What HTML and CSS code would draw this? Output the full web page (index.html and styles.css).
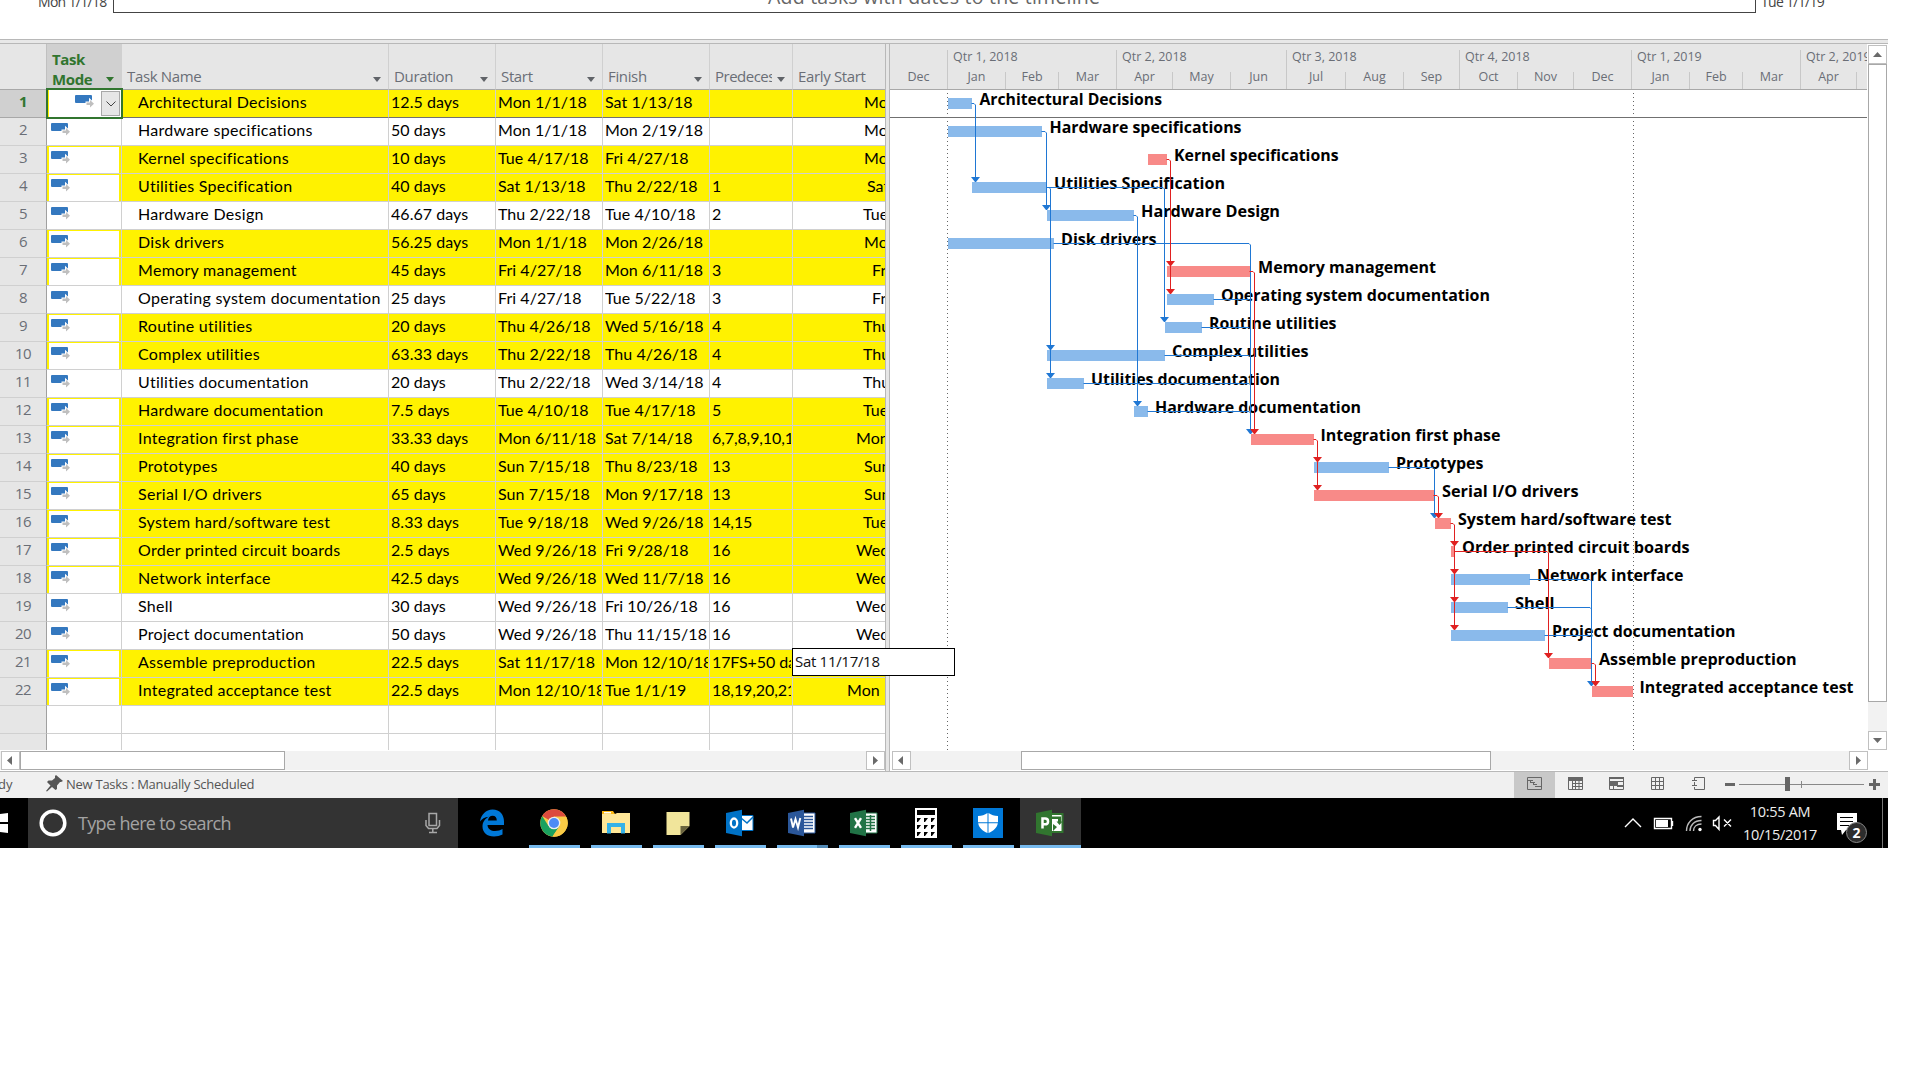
FILE: index.html
```html
<!DOCTYPE html>
<html lang="en">
<head>
<meta charset="utf-8">
<title>Project schedule</title>
<link rel="stylesheet" href="styles.css">
</head>
<body>
<svg class="defs" width="0" height="0">
  <symbol id="mode" viewBox="0 0 19 14">
    <rect width="17" height="8" rx="1" fill="#3478bf"/>
    <path fill="#bfbfbf" stroke="#fff" stroke-width="2" paint-order="stroke" d="M11.500 7.500H15V5l4 3.800-4 3.700V10h-3.500z"/>
  </symbol>
</svg>
<div class="app">
  <section class="timeline">
    <span class="tl-start">Mon 1/1/18</span>
    <div class="tl-box"><span>Add tasks with dates to the timeline</span></div>
    <span class="tl-end">Tue 1/1/19</span>
  </section>
  <div class="hsplit"></div>

  <main class="panes">
    <section class="sheet">
      <header class="row head">
        <div></div>
        <div class="on">Task<br>Mode<i class="tri"></i></div>
        <div>Task Name<i class="tri"></i></div>
        <div>Duration<i class="tri"></i></div>
        <div>Start<i class="tri"></i></div>
        <div>Finish<i class="tri"></i></div>
        <div><span class="cut">Predecessors</span><i class="tri"></i></div>
        <div>Early Start</div>
      </header>
      <div class="rows" id="rows"></div>
      <div class="hscroll">
        <span class="sbtn"><svg width="19" height="19"><path d="M11 5v9L6 9.500z"/></svg></span>
        <span class="thumb sheet-thumb"></span>
        <span class="grow"></span>
        <span class="sbtn"><svg width="19" height="19"><path d="M7 5v9l5-4.500z"/></svg></span>
      </div>
      <div class="tip">Sat 11/17/18</div>
    </section>
    <div class="vsplit"></div>
    <section class="chart">
      <header class="scale" id="scale"></header>
      <svg class="gantt" id="gantt" viewBox="890 90 977 660" width="977" height="660"></svg>
      <div class="hscroll">
        <span class="sbtn"><svg width="19" height="19"><path d="M11 5v9L6 9.500z"/></svg></span>
        <span class="gap-left"></span>
        <span class="thumb chart-thumb"></span>
        <span class="grow"></span>
        <span class="sbtn"><svg width="19" height="19"><path d="M7 5v9l5-4.500z"/></svg></span>
      </div>
    </section>
    <aside class="vscroll">
      <span class="sbtn"><svg width="19" height="19"><path d="M5 12h9L9.500 7z"/></svg></span>
      <span class="vthumb"></span>
      <span class="grow"></span>
      <span class="sbtn"><svg width="19" height="19"><path d="M5 7h9l-4.500 5z"/></svg></span>
    </aside>
  </main>

  <footer class="status">
    <span class="ready">dy</span>
    <svg class="pin" width="17" height="17" viewBox="0 0 17 17"><path fill="#555" d="M10 0l7 6-2 1-1 0-3 3.500 0 3.500-1.500 1L6 12 1 16.500 0 16l4.500-5.500L1 7l1.500-1.500H6L9 3V1z"/></svg>
    <span class="newtasks">New Tasks : Manually Scheduled</span>
    <div class="views">
      <span class="view sel"><svg width="15" height="13"><path d="M.5.5h14v12H.5zM1 3.500h5M3 5.500h5M6 7.500h4M8 9.500h6M3.500 3v2M6.500 5v2"/></svg></span>
      <span class="view"><svg width="15" height="13"><path d="M.5.5h14v12H.5zM4.500 3v10M7.500 3v10M11 3v10M4 6.500h11M4 9.500h11"/><path class="f" d="M0 0h15v4H0z"/></svg></span>
      <span class="view"><svg width="15" height="13"><path d="M.5.5h14v12H.5zM0 8.500h15M8 4.500h7M4.500 8v5"/><path class="f" d="M0 0h15v2H0zM0 4h9v5H0zM8 8h7v2H8z"/></svg></span>
      <span class="view"><svg width="13" height="13"><path d="M.5.5h12v12H.5zM4.500 0v13M8.500 0v13M0 4.500h13M0 8.500h13"/></svg></span>
      <span class="view"><svg width="13" height="13"><path d="M2.500 3V.5h10v12h-10V10M2.500 5v3M0 3.500h5M0 8.500h5"/></svg></span>
    </div>
    <svg class="zoom" width="158" height="20" viewBox="0 0 158 20"><path stroke="#888" d="M16 10.500h125M78.500 7v7"/><path class="f" d="M2 9h10v3H2zM62 3h5v14h-5zM146 9h11v3h-11zM150 5h3v11h-3z"/></svg>
  </footer>

  <nav class="taskbar">
    <svg class="win" width="28" height="50"><path fill="#fff" d="M0 16l8-1v9H0zM0 26h8v9l-8-1z"/></svg>
    <div class="search">
      <svg width="28" height="28"><circle cx="14" cy="14" r="11.800" fill="none" stroke="#fff" stroke-width="3.500"/></svg>
      <span>Type here to search</span>
      <svg class="mic" width="16" height="22" viewBox="0 0 16 22" fill="none" stroke="#a8a8a8" stroke-width="1.500"><path d="M4 1.500h7.500v12H4zM1 8v5.500l2.500 3H12l2.500-3V8M7.800 17v3.500M4 20.500h8"/></svg>
    </div>
    <div class="apps">
      <span class="slot"><svg width="28" height="28" viewBox="0 0 28 28"><path fill="#0078d7" d="M2 12.500C3 5.500 8 .5 14.500.5 22 .5 26 6 26 12.500V16H9.500c.3 4 3.500 6 7.500 6 3 0 5.500-.8 7.500-2v5.500c-2.500 1.300-5.300 2-8.500 2C9 27.500 4.500 23.500 4.500 17.500c0-4.500 2.500-8 6.300-9.800C6.500 8 4 10 2 12.500zM10 11.500h8.800c0-3-1.500-4.800-4.200-4.800-2.600 0-4.200 1.800-4.600 4.800z"/></svg></span>
      <span class="slot run"><svg width="28" height="28" viewBox="0 0 28 28"><circle cx="14" cy="14" r="13.700" fill="#f9cb45"/><path fill="#dc4b3e" d="M14 14L2.200 7A13.700 13.700 0 0 1 26 7.500H14z"/><path fill="#1aa15f" d="M2.200 7A13.700 13.700 0 0 0 12.500 27.600L19.500 17 8.500 17z"/><path fill="#f9cb45" d="M12.500 27.600L19.800 17 19 8h7.300a13.700 13.700 0 0 1-13.800 19.600z"/><circle cx="14" cy="14" r="6.300" fill="#eee"/><circle cx="14" cy="14" r="5" fill="#4c8bf5"/></svg></span>
      <span class="slot run"><svg width="28" height="28" viewBox="0 0 28 28"><path fill="#fdb913" d="M0 2h11l2 3v4H0z"/><path fill="#ffe797" d="M0 5h13l2-1h13v20H0z"/><path fill="#fff" d="M2 3h7v1.500H2z"/><path fill="#35b2e8" d="M5 24.500V14h18v10.500h-4V18H9v6.500z"/></svg></span>
      <span class="slot run"><svg width="28" height="28" viewBox="0 0 28 28"><path fill="#f1e59b" d="M2.500 3h23v14l-9 9h-14z"/><path fill="#6a643f" d="M16.500 17h9l-9 9z"/></svg></span>
      <span class="slot run"><svg width="28" height="28" viewBox="0 0 28 28"><path fill="#fff" stroke="#0072c6" stroke-width="1" d="M14 6.500h13v15H14z"/><path fill="none" stroke="#0072c6" stroke-width="1.500" d="M15 9l6 5 6-6"/><path fill="#0072c6" d="M0 4L16 .8v26.500L0 24z"/><ellipse cx="8" cy="14" rx="3.200" ry="4.500" fill="none" stroke="#fff" stroke-width="2.300"/></svg></span>
      <span class="slot run multi"><svg width="28" height="28" viewBox="0 0 28 28"><path fill="#fff" stroke="#2b579a" d="M15 4h12v20H15z"/><path stroke="#2b579a" stroke-width="1.500" d="M16 7.500h9M16 10.500h9M16 13.500h9M16 16.500h9M16 19.500h9"/><path fill="#2b579a" d="M0 4L16 .8v26.500L0 24z"/><path fill="none" stroke="#fff" stroke-width="1.900" d="M3 9.500l2 9 2.500-8.500 2.500 8.500 2.300-9.500"/></svg></span>
      <span class="slot run"><svg width="28" height="28" viewBox="0 0 28 28"><path fill="#fff" stroke="#217346" d="M15 4h12v20H15z"/><path stroke="#217346" stroke-width="1.500" d="M16 7.500h9M16 10.500h9M16 13.500h9M16 16.500h9M16 19.500h9M20.500 6v16"/><path fill="#217346" d="M0 4L16 .8v26.500L0 24z"/><path fill="none" stroke="#fff" stroke-width="2.400" d="M5 9.200l6 9.600M11 9.200l-6 9.600"/></svg></span>
      <span class="slot run"><svg width="22" height="30" viewBox="0 0 22 30"><path fill="#fff" d="M0 0h22v30H0z"/><path fill="#000" d="M2 2h18v5H2zM2 10h4l-3 4H2zM9 10h4l-3 4H9zM16 10h4l-3 4h-1zM2 17h4l-3 4H2zM9 17h4l-3 4H9zM16 17h4l-3 4h-1zM2 24h4l-3 4H2zM9 24h4l-3 4H9zM16 24h4l-3 4h-1z"/></svg></span>
      <span class="slot run"><svg width="30" height="30" viewBox="0 0 30 30"><path fill="#0078d7" d="M0 0h30v30H0z"/><path fill="#fff" d="M14.500 5v9.300H5V8c4 0 6.500-1 9.500-3zM15.500 5v9.300H25V8c-4 0-6.500-1-9.500-3zM5.200 15.300h9.300v9.700c-5-2-8.500-5.200-9.300-9.700zM24.800 15.300h-9.300v9.700c5-2 8.500-5.200 9.300-9.700z"/></svg></span>
      <span class="slot run active"><svg width="28" height="28" viewBox="0 0 28 28"><path fill="#fff" stroke="#31752f" stroke-width="2" d="M14 5h12.500v18H14z"/><path fill="#31752f" d="M16 7.500h9v5h1.500L23.500 16 20.500 12.500H22V10h-6zM17 15l4 3-4 4z"/><path fill="#31752f" d="M0 4L16 .8v26.500L0 24z"/><path fill="none" stroke="#fff" stroke-width="2.500" d="M6.500 19.500V9.500h2.700c3.800 0 3.800 5.800 0 5.800H6.500"/></svg></span>
    </div>
    <div class="tray">
      <svg width="120" height="50" viewBox="1620 798 120 50" fill="none" stroke="#fff" stroke-width="1.400">
        <path d="M1625 827l8-8 8 8"/>
        <path d="M1654.500 818.500h17v10h-17zM1672.500 821v5"/><path fill="#fff" stroke="none" d="M1656 820h12v7h-12z"/>
        <path stroke="#bbb" d="M1686.500 831c0-8 6-14.500 15-14.500M1690 831c0-6 4.500-10.500 11.500-10.500M1693.500 831c0-4 3-7 8-7"/><circle cx="1700" cy="829.500" r="1.700" fill="#fff" stroke="none"/>
        <path d="M1713.500 820.500v5h2l3.500 4v-12.500l-3.500 3.500zM1724 819.500l7 7M1731 819.500l-7 7"/>
      </svg>
      <div class="clock"><span>10:55 AM</span><span>10/15/2017</span></div>
      <svg width="40" height="50" viewBox="1832 798 40 50"><path fill="#fff" d="M1837 813h20v17h-11l-4 5-1-5h-4z"/><path stroke="#000" stroke-width="1.200" d="M1840 817.500h13M1840 821.500h13M1840 825.500h9"/><circle cx="1856.500" cy="832.500" r="10" fill="#2d2d2d" stroke="#888"/><text class="badge" x="1856.500" y="838" text-anchor="middle">2</text></svg>
    </div>
  </nav>
</div>
<script src="script.js"></script>
</body>
</html>
```
FILE: styles.css
```css
* { box-sizing: border-box; }
body { margin: 0; background: #fff; font-family: "Open Sans", "Noto Sans", sans-serif; color: #000; overflow: hidden; }
.defs { position: absolute; }
.app { width: 1888px; display: flex; flex-direction: column; }

/* timeline strip */
.timeline { display: flex; height: 39px; overflow: hidden; color: #444; font-size: 14px; line-height: 20px; }
.timeline > span { height: 20px; margin-top: -8px; letter-spacing: -0.7px; white-space: nowrap; }
.tl-start { width: 113px; padding-left: 38px; }
.tl-box { width: 1643px; height: 13px; border: solid #444; border-width: 0 1px 1px; }
.tl-box span { display: block; margin: -16px 0 0 654px; font-size: 19.500px; line-height: 26px; color: #666; white-space: nowrap; letter-spacing: 0.22px; }
.tl-end { padding-left: 5px; }
.hsplit { height: 5px; background: #e8e8e8; border: solid #b8b8b8; border-width: 1px 0; }

/* panes */
.panes { display: flex; height: 727px; }
.sheet { position: relative; width: 885px; display: flex; flex-direction: column; }
.row { display: grid; grid-template-columns: 47px 75px 267px 107px 107px 107px 83px 92px; height: 28px; }
.row > div { border-right: 1px solid #d0d0d0; border-bottom: 1px solid #d0d0d0; overflow: hidden; white-space: nowrap; }
.row > div:last-child { border-right: 0; }
.head { height: 46px; background: #e6e6e6; color: #6a6e76; font-size: 15px; line-height: 20px; }
.head > div { display: flex; align-items: flex-end; justify-content: space-between; padding: 0 7px 3px 5px; border-bottom-color: #a8a8a8; letter-spacing: -0.35px; }
.head > div:first-child { border-right-color: #c0c0c0; }
.head .on { background: #d0d0d0; color: #31752f; font-weight: 700; padding-bottom: 0; letter-spacing: -0.4px; padding-right: 7px; }
.head .cut { width: 57px; overflow: hidden; letter-spacing: -0.5px; }
.tri { flex: none; border: solid transparent; border-width: 5px 4px 0; border-top-color: #606368; margin-bottom: 4px; }
.on .tri { border-top-color: #31752f; margin-bottom: 7px; }
.rows .row:last-child { height: 16px; }
.rows .row > div { font: 16px/23px "Lato", "Open Sans", sans-serif; padding-left: 2px; letter-spacing: 0.05px; }
.rows .row > .num { font: 15px/23px "Open Sans", sans-serif; background: #e6e6e6; color: #6a6e76; border-right-color: #a0a0a0; text-align: center; padding: 0; letter-spacing: -0.500px; }
.rows .row > .name { padding-left: 16px; letter-spacing: 0.29px; }
.rows .row:last-child > div { border-bottom: 0; }
.cell { display: block; overflow: hidden; margin-right: 1px; height: 26px; }
.cell.pred { letter-spacing: -0.1px; }
.hl > div { background: #fff200; }
.rows .row > .mode { background: #fff; padding: 0; }
.mode > svg { display: block; margin: 5px 0 0 4px; }
.rows .hl > .mode { box-shadow: inset 2px 1px #fff200, inset -2px 0 #fff200; }
.rows .picked > div { border-bottom-color: #707070; }
.rows .picked > .num { background: #d0d0d0; color: #31752f; font-weight: 700; border-bottom-color: #a8a8a8; }
.rows .picked > .mode { position: relative; overflow: visible; box-shadow: inset 2px 0 #fff200; }
.picked .mode > svg { margin-left: 28px; }
.picker { position: absolute; left: -1px; top: -2px; width: 77px; height: 31px; border: 2px solid #31752f; display: flex; justify-content: flex-end; padding: 1px; }
.picker span { width: 19px; height: 25px; background: #e6e6e6; border: 1px solid #a8a8a8; }
.picker svg { display: block; margin: 8px 0 0 4px; }

.tip { position: absolute; left: 792px; top: 604px; width: 163px; height: 28px; z-index: 2; background: #fff; border: 1px solid #000; padding-left: 2px; font-size: 15px; line-height: 25px; color: #111; letter-spacing: -0.3px; }
.vsplit { width: 5px; background: #e6e6e6; border: solid #b8b8b8; border-width: 0 1px; }

/* gantt */
.chart { width: 977px; display: flex; flex-direction: column; }
.scale { display: flex; height: 46px; background: #e6e6e6; border-bottom: 1px solid #a8a8a8; color: #6a6e76; font-size: 12.500px; overflow: hidden; }
.qtr { flex: none; padding-top: 6px; display: flex; flex-direction: column; }
.qtr .title { height: 22px; line-height: 14px; border-left: 1px solid #c8c8c8; padding-left: 5px; white-space: nowrap; }
.qtr:first-child .title { border: 0; }
.months { display: flex; }
.months span { flex: none; height: 17px; line-height: 10px; text-align: center; border-left: 1px solid #c8c8c8; }
.qtr:first-child .months span { border: 0; }
.gantt { display: block; }
.gantt text { font: 700 16px "Open Sans", sans-serif; }
.link { fill: none; stroke-width: 1; }

/* scroll bars */
.hscroll { display: flex; height: 19px; margin-top: 1px; background: #f2f2f2; }
.sheet .hscroll { padding-left: 1px; }
.chart .hscroll { margin-left: 2px; margin-right: -1px; }
.sbtn { flex: none; width: 19px; height: 19px; background: #fff; box-shadow: inset 0 0 0 1px #c0c0c0; }
.sbtn svg { display: block; fill: #6a6a6a; }
.thumb { background: #fff; border: 1px solid #a8a8a8; }
.sheet-thumb { width: 265px; }
.chart-thumb { width: 470px; }
.gap-left { width: 110px; }
.grow { flex: 1; }
.vscroll { width: 19px; margin-left: 1px; height: 705px; margin-top: 1px; display: flex; flex-direction: column; background: #f2f2f2; }
.vthumb { height: 638px; background: #fff; border: 1px solid #a8a8a8; }

/* status bar */
.status { height: 27px; background: #f0f0f0; border-top: 1px solid #b8b8b8; display: flex; align-items: center; font-size: 13px; color: #555; white-space: nowrap; }
.ready { width: 47px; margin-left: -2px; padding-bottom: 2px; }
.pin { margin: -3px 3px 0 1px; }
.newtasks { letter-spacing: -0.26px; padding-bottom: 2px; }
.views { display: flex; margin-left: auto; align-self: stretch; }
.view { width: 41px; display: flex; align-items: center; justify-content: center; padding-bottom: 3px; }
.view svg { fill: none; stroke: #666; }
.view .f, .zoom .f { fill: #666; stroke: none; }
.sel { background: #c8c8c8; }
.zoom { margin: -2px 7px 0 4px; }

/* taskbar */
.taskbar { display: flex; height: 50px; background: #000; color: #fff; }
.search { width: 430px; background: #333; display: flex; align-items: center; padding: 0 17px 0 11px; font-size: 18px; color: #a3a3a3; }
.search span { margin: 0 0 0 11px; letter-spacing: -0.67px; }
.mic { margin-left: auto; }
.apps { display: flex; margin-left: 3px; }
.slot { width: 62px; display: flex; align-items: center; justify-content: center; }
.slot.run { background: linear-gradient(#76b9ed, #76b9ed) 6px 47px / 51px 3px no-repeat; }
.slot.multi { background: linear-gradient(90deg, #76b9ed 40px, #5289b5 40px) 6px 47px / 51px 3px no-repeat; }
.slot.active { width: 61px; background: linear-gradient(#333 47px, #76b9ed 47px); margin-left: 1px; }
.slot.active svg { margin-right: 2px; }
.tray { display: flex; margin-left: auto; width: 268px; border-right: 5px solid #000; box-shadow: inset -1px 0 #777; }
.clock { width: 80px; margin: 0 12px 0 0; font-size: 14.500px; line-height: 23px; text-align: center; letter-spacing: -0.3px; display: flex; flex-direction: column; padding-top: 2px; color: #eee; }
.tray svg { flex: none; }
.badge { font-size: 14px; font-weight: 700; fill: #fff; }
```
FILE: script.js
```js
// name, duration, start, finish, predecessors, early start, early-start inset, highlighted,
// bar start, bar end, critical, label start, label end
const tasks = [
  ["Architectural Decisions", "12.5 days", "Mon 1/1/18", "Sat 1/13/18", "", "Mon", 71, 1, 948, 972, 0, 979.5, 1162],
  ["Hardware specifications", "50 days", "Mon 1/1/18", "Mon 2/19/18", "", "Mon", 71, 0, 948, 1042, 0, 1049.5, 1241.5],
  ["Kernel specifications", "10 days", "Tue 4/17/18", "Fri 4/27/18", "", "Mon", 71, 1, 1148, 1167, 1, 1174, 1338.5],
  ["Utilities Specification", "40 days", "Sat 1/13/18", "Thu 2/22/18", "1", "Sat", 74, 1, 972, 1047, 0, 1054, 1225],
  ["Hardware Design", "46.67 days", "Thu 2/22/18", "Tue 4/10/18", "2", "Tue", 70, 0, 1047, 1134, 0, 1141, 1280],
  ["Disk drivers", "56.25 days", "Mon 1/1/18", "Mon 2/26/18", "", "Mon", 71, 1, 948, 1054, 0, 1061, 1156.5],
  ["Memory management", "45 days", "Fri 4/27/18", "Mon 6/11/18", "3", "Fri", 79, 1, 1167, 1250, 1, 1258, 1436],
  ["Operating system documentation", "25 days", "Fri 4/27/18", "Tue 5/22/18", "3", "Fri", 79, 0, 1167, 1214, 0, 1221, 1490],
  ["Routine utilities", "20 days", "Thu 4/26/18", "Wed 5/16/18", "4", "Thu", 70, 1, 1165, 1202, 0, 1209, 1336.5],
  ["Complex utilities", "63.33 days", "Thu 2/22/18", "Thu 4/26/18", "4", "Thu", 70, 1, 1047, 1165, 0, 1172, 1308.5],
  ["Utilities documentation", "20 days", "Thu 2/22/18", "Wed 3/14/18", "4", "Thu", 70, 0, 1047, 1084, 0, 1091, 1280],
  ["Hardware documentation", "7.5 days", "Tue 4/10/18", "Tue 4/17/18", "5", "Tue", 70, 1, 1134, 1148, 0, 1155, 1361],
  ["Integration first phase", "33.33 days", "Mon 6/11/18", "Sat 7/14/18", "6,7,8,9,10,11,12", "Mon", 63, 1, 1251, 1314, 1, 1320.5, 1500.5],
  ["Prototypes", "40 days", "Sun 7/15/18", "Thu 8/23/18", "13", "Sun", 71, 1, 1314, 1389, 0, 1396, 1483.5],
  ["Serial I/O drivers", "65 days", "Sun 7/15/18", "Mon 9/17/18", "13", "Sun", 71, 1, 1314, 1434, 1, 1442, 1578.5],
  ["System hard/software test", "8.33 days", "Tue 9/18/18", "Wed 9/26/18", "14,15", "Tue", 70, 1, 1435, 1451, 1, 1458, 1671.5],
  ["Order printed circuit boards", "2.5 days", "Wed 9/26/18", "Fri 9/28/18", "16", "Wed", 63, 1, 1451, 1455, 1, 1462, 1689.5],
  ["Network interface", "42.5 days", "Wed 9/26/18", "Wed 11/7/18", "16", "Wed", 63, 1, 1451, 1530, 0, 1537, 1683.5],
  ["Shell", "30 days", "Wed 9/26/18", "Fri 10/26/18", "16", "Wed", 63, 0, 1451, 1508, 0, 1515, 1554.5],
  ["Project documentation", "50 days", "Wed 9/26/18", "Thu 11/15/18", "16", "Wed", 63, 0, 1451, 1545, 0, 1552, 1735.5],
  ["Assemble preproduction", "22.5 days", "Sat 11/17/18", "Mon 12/10/18", "17FS+50 days", "", 63, 1, 1549, 1592, 1, 1599, 1796.5],
  ["Integrated acceptance test", "22.5 days", "Mon 12/10/18", "Tue 1/1/19", "18,19,20,21", "Mon", 54, 1, 1592, 1633, 1, 1639.5, 1853.5],
];

const picker = '<div class="picker"><span><svg width="10" height="8" fill="none" stroke="#444"><path d="M.5 1.5L5 6 9.500 1.500"/></svg></span></div>';
const modeIcon = '<svg width="19" height="14"><use href="#mode"/></svg>';
let html = "";
tasks.forEach((t, i) => {
  const cls = "row" + (t[7] ? " hl" : "") + (i === 0 ? " picked" : "");
  html += `<div class="${cls}"><div class="num">${i + 1}</div><div class="mode">${modeIcon}${i === 0 ? picker : ""}</div><div class="name">${t[0]}</div>`
    + [1, 2, 3, 4].map(k => `<div><span class="cell${k === 4 ? " pred" : ""}">${t[k]}</span></div>`).join("")
    + `<div class="early" style="padding-left:${t[6]}px">${t[5]}</div></div>`;
});
for (let i = 0; i < 2; i++) html += '<div class="row"><div class="num"></div><div class="mode"></div>' + "<div></div>".repeat(6) + "</div>";
document.getElementById("rows").innerHTML = html;

// Time scale: quarter title and [month, width] pairs
const scale = [
  ["", [["Dec", 57]]],
  ["Qtr 1, 2018", [["Jan", 58], ["Feb", 53], ["Mar", 58]]],
  ["Qtr 2, 2018", [["Apr", 56], ["May", 58], ["Jun", 56]]],
  ["Qtr 3, 2018", [["Jul", 59], ["Aug", 58], ["Sep", 56]]],
  ["Qtr 4, 2018", [["Oct", 58], ["Nov", 56], ["Dec", 58]]],
  ["Qtr 1, 2019", [["Jan", 58], ["Feb", 53], ["Mar", 58]]],
  ["Qtr 2, 2019", [["Apr", 56], ["", 58]]],
];
document.getElementById("scale").innerHTML = scale.map(([q, ms]) =>
  `<div class="qtr"><div class="title">${q}</div><div class="months">${ms.map(([m, w]) => `<span style="width:${w}px">${m}</span>`).join("")}</div></div>`).join("");

const BLUE = "#1f77d4", RED = "#e02020";
const mid = n => 103.5 + 28 * (n - 1);
const barTop = n => 98 + 28 * (n - 1);
let g = '<path stroke="#666" stroke-dasharray="1 3" d="M947.5 93V750M1633.500 93V750"/><path stroke="#707070" d="M890 117.500H1868"/>';
tasks.forEach((t, i) => {
  g += `<rect x="${t[8]}" y="${barTop(i + 1)}" width="${t[9] - t[8]}" height="11" fill="${t[10] ? "#f88a88" : "#8abaeb"}"/>`;
});
tasks.forEach((t, i) => {
  g += `<text x="${t[11]}" y="${105 + 28 * i}" textLength="${t[12] - t[11]}" lengthAdjust="spacingAndGlyphs">${t[0]}</text>`;
});
// from-task, link x, successor tasks, colour
const links = [
  [1, 975.5, [4], BLUE], [2, 1046.5, [5], BLUE], [4, 1050.5, [10, 11], BLUE], [4, 1164.5, [9], BLUE],
  [5, 1137.5, [12], BLUE], [6, 1250.5, [13], BLUE], [8, 1250.5, [], BLUE], [9, 1250.5, [], BLUE],
  [10, 1250.5, [], BLUE], [11, 1250.5, [], BLUE], [12, 1250.5, [], BLUE], [14, 1434.5, [16], BLUE],
  [18, 1591.5, [22], BLUE], [19, 1591.5, [], BLUE], [20, 1591.5, [], BLUE],
  [3, 1170.5, [7, 8], RED], [7, 1254.5, [13], RED], [13, 1317.5, [14, 15], RED], [15, 1438.5, [16], RED],
  [16, 1454.5, [17, 18, 19, 20], RED], [17, 1548.5, [21], RED], [21, 1595.5, [22], RED],
];
links.forEach(([from, x, to, c]) => {
  const y = mid(from), last = to.length ? barTop(to[to.length - 1]) - 4 : y + 2;
  g += `<path class="link" stroke="${c}" d="M${tasks[from - 1][9] - 0.5} ${y}H${x - 1.5}L${x} ${y + 1.5}V${last}"/>`;
  to.forEach(n => { const a = barTop(n); g += `<path fill="${c}" d="M${x - 4.5} ${a - 5}h9l-4 5h-1z"/>`; });
});
document.getElementById("gantt").innerHTML = g;
```
